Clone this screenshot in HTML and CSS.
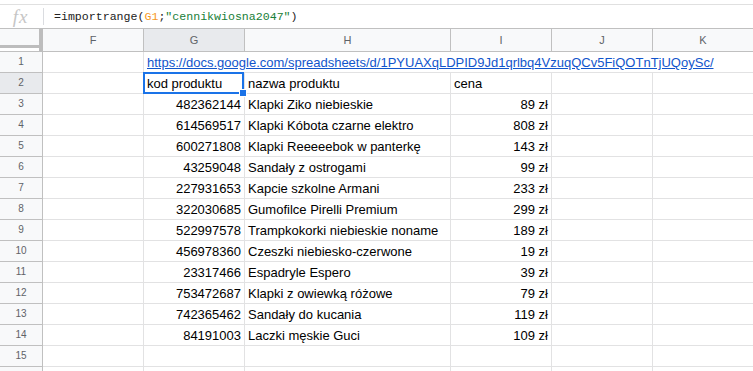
FILE: index.html
```html
<!DOCTYPE html>
<html>
<head>
<meta charset="utf-8">
<link rel="stylesheet" href="styles.css">
</head>
<body>
<div class="topgap"></div>
<div class="fbar">
  <div class="fx">fx</div>
  <div class="fsep"></div>
  <div class="formula">=importrange(<span class="ref">G1</span>;<span class="str">"cennikwiosna2047"</span>)</div>
</div>
<div class="grid">
  <div class="corner"></div>
  <div class="ch">F</div>
  <div class="ch sel">G</div>
  <div class="ch">H</div>
  <div class="ch">I</div>
  <div class="ch">J</div>
  <div class="ch last">K</div>

  <div class="rh">1</div>
  <div class="c"></div>
  <div class="c span"><a class="link">https://docs.google.com/spreadsheets/d/1PYUAXqLDPID9Jd1qrlbq4VzuqQCv5FiQOTnTjUQoySc/</a></div>

  <div class="rh sel">2</div>
  <div class="c"></div>
  <div class="c active">kod produktu<div class="selbox"></div><div class="handle"></div></div>
  <div class="c">nazwa produktu</div>
  <div class="c">cena</div>
  <div class="c"></div>
  <div class="c last"></div>

  <div class="rh">3</div><div class="c"></div><div class="c n">482362144</div><div class="c">Klapki Ziko niebieskie</div><div class="c n">89 zł</div><div class="c"></div><div class="c last"></div>
  <div class="rh">4</div><div class="c"></div><div class="c n">614569517</div><div class="c">Klapki Kóbota czarne elektro</div><div class="c n">808 zł</div><div class="c"></div><div class="c last"></div>
  <div class="rh">5</div><div class="c"></div><div class="c n">600271808</div><div class="c">Klapki Reeeeebok w panterkę</div><div class="c n">143 zł</div><div class="c"></div><div class="c last"></div>
  <div class="rh">6</div><div class="c"></div><div class="c n">43259048</div><div class="c">Sandały z ostrogami</div><div class="c n">99 zł</div><div class="c"></div><div class="c last"></div>
  <div class="rh">7</div><div class="c"></div><div class="c n">227931653</div><div class="c">Kapcie szkolne Armani</div><div class="c n">233 zł</div><div class="c"></div><div class="c last"></div>
  <div class="rh">8</div><div class="c"></div><div class="c n">322030685</div><div class="c">Gumofilce Pirelli Premium</div><div class="c n">299 zł</div><div class="c"></div><div class="c last"></div>
  <div class="rh">9</div><div class="c"></div><div class="c n">522997578</div><div class="c">Trampkokorki niebieskie noname</div><div class="c n">189 zł</div><div class="c"></div><div class="c last"></div>
  <div class="rh">10</div><div class="c"></div><div class="c n">456978360</div><div class="c">Czeszki niebiesko-czerwone</div><div class="c n">19 zł</div><div class="c"></div><div class="c last"></div>
  <div class="rh">11</div><div class="c"></div><div class="c n">23317466</div><div class="c">Espadryle Espero</div><div class="c n">39 zł</div><div class="c"></div><div class="c last"></div>
  <div class="rh">12</div><div class="c"></div><div class="c n">753472687</div><div class="c">Klapki z owiewką różowe</div><div class="c n">79 zł</div><div class="c"></div><div class="c last"></div>
  <div class="rh">13</div><div class="c"></div><div class="c n">742365462</div><div class="c">Sandały do kucania</div><div class="c n">119 zł</div><div class="c"></div><div class="c last"></div>
  <div class="rh">14</div><div class="c"></div><div class="c n">84191003</div><div class="c">Laczki męskie Guci</div><div class="c n">109 zł</div><div class="c"></div><div class="c last"></div>
  <div class="rh">15</div><div class="c"></div><div class="c"></div><div class="c"></div><div class="c"></div><div class="c"></div><div class="c last"></div>
  <div class="rh"></div><div class="c"></div><div class="c"></div><div class="c"></div><div class="c"></div><div class="c"></div><div class="c last"></div>
</div>
</body>
</html>
```

FILE: styles.css
```css
html, body {
  margin: 0;
  padding: 0;
  background: #fff;
  overflow: hidden;
  width: 753px;
  height: 371px;
}
.topgap {
  height: 4px;
}
.fbar {
  display: flex;
  align-items: center;
  height: 23px;
  border-top: 1px solid #e0e0e0;
}
.fx {
  width: 43px;
  text-align: center;
  font-family: "Liberation Serif", serif;
  font-style: italic;
  font-size: 19px;
  color: #c6c6c6;
  line-height: 23px;
  letter-spacing: 1px;
  box-sizing: border-box;
  padding-right: 2px;
}
.fsep {
  width: 1px;
  height: 17px;
  background: #dadce0;
}
.formula {
  padding-left: 10px;
  font-family: "Liberation Mono", monospace;
  font-size: 11.6px;
  color: #222;
  line-height: 23px;
}
.ref { color: #f7981d; }
.str { color: #188038; }

.grid {
  display: grid;
  grid-template-columns: 43px 101px 101px 206px 101px 101px 100px;
  grid-template-rows: 24px;
  grid-auto-rows: 21px;
  font-family: "Liberation Sans", Arial, sans-serif;
  font-size: 13px;
  color: #000;
}
.corner {
  background: #f8f9fa;
  border-top: 1px solid #c0c0c0;
  border-right: 4px solid #bdbdbd;
  border-bottom: 1px solid #c0c0c0;
  box-shadow: inset 0 -3px 0 #fff, inset 0 -6px 0 #bdbdbd;
  box-sizing: border-box;
}
.ch {
  background: #f8f9fa;
  border-top: 1px solid #c0c0c0;
  border-right: 1px solid #c0c0c0;
  border-bottom: 1px solid #c0c0c0;
  box-sizing: border-box;
  text-align: center;
  font-family: "Liberation Sans", Arial, sans-serif;
  font-size: 11px;
  color: #5f6368;
  line-height: 22px;
}
.ch.last { border-right: none; }
.ch.sel, .rh.sel {
  background: #e8eaed;
}
.rh {
  background: #f8f9fa;
  border-right: 1px solid #c0c0c0;
  border-bottom: 1px solid #c0c0c0;
  box-sizing: border-box;
  text-align: center;
  font-size: 10px;
  color: #5f6368;
  line-height: 20px;
}
.c {
  border-right: 1px solid #e2e2e3;
  border-bottom: 1px solid #e2e2e3;
  box-sizing: border-box;
  padding: 0 3px;
  line-height: 21px;
  white-space: nowrap;
  overflow: hidden;
}
.c.last { border-right: none; }
.c.n { text-align: right; }
.c.span {
  grid-column: span 5;
  overflow: visible;
  border-right: none;
}
.link {
  color: #1155cc;
  text-decoration: underline;
}
.c.active {
  position: relative;
  overflow: visible;
}
.selbox {
  position: absolute;
  left: -1px;
  top: -1px;
  right: 0;
  bottom: -1px;
  border: 2px solid #1a73e8;
  pointer-events: none;
}
.handle {
  position: absolute;
  right: -3px;
  bottom: -4px;
  width: 6px;
  height: 6px;
  background: #1a73e8;
  border: 1px solid #fff;
  z-index: 2;
}
```
